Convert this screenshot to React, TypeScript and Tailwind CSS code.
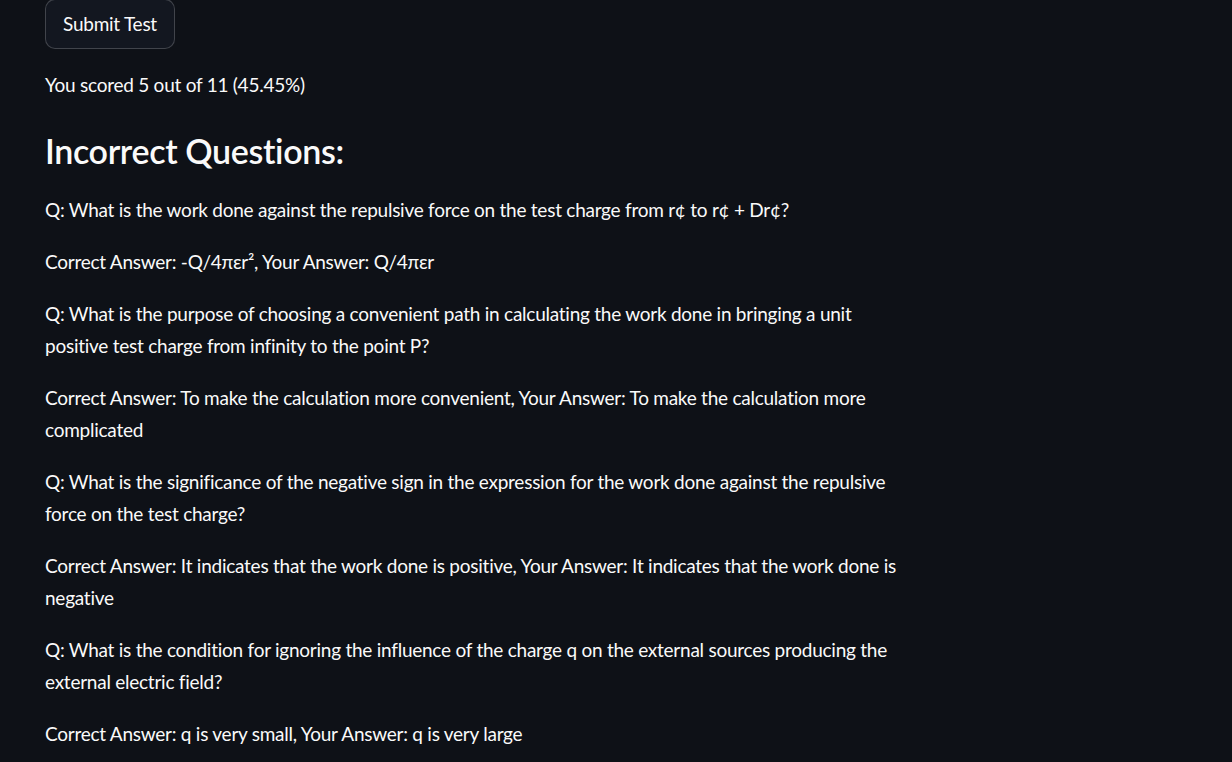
import React from 'react';

const items = [
  'Q: What is the work done against the repulsive force on the test charge from r¢ to r¢ + Dr¢?',
  'Correct Answer: -Q/4πεr², Your Answer: Q/4πεr',
  'Q: What is the purpose of choosing a convenient path in calculating the work done in bringing a unit positive test charge from infinity to the point P?',
  'Correct Answer: To make the calculation more convenient, Your Answer: To make the calculation more complicated',
  'Q: What is the significance of the negative sign in the expression for the work done against the repulsive force on the test charge?',
  'Correct Answer: It indicates that the work done is positive, Your Answer: It indicates that the work done is negative',
  'Q: What is the condition for ignoring the influence of the charge q on the external sources producing the external electric field?',
  'Correct Answer: q is very small, Your Answer: q is very large',
];

export default function App() {
  return (
    <div className="min-h-screen bg-[#0e1117] text-[#fafafa] font-['Lato',sans-serif] overflow-hidden">
      <div className="-mt-[1px] pl-[45px] w-[907px] flex flex-col gap-5">
        <div>
          <button className="w-[130px] h-[50px] rounded-[10px] border border-[#fafafa]/20 bg-[#131720] text-[19px] tracking-[-0.25px] text-[#fafafa]">
            Submit Test
          </button>
        </div>
        <p className="text-[19px] leading-[32px] tracking-[-0.25px]">You scored 5 out of 11 (45.45%)</p>
        <h3 className="pt-[9px] pb-[2px] text-[34px] leading-[42px] font-semibold tracking-[-0.35px]">Incorrect Questions:</h3>
        {items.map((t, i) => (
          <p key={i} className="text-[19px] leading-[32px] tracking-[-0.25px]">
            {t}
          </p>
        ))}
      </div>
    </div>
  );
}
